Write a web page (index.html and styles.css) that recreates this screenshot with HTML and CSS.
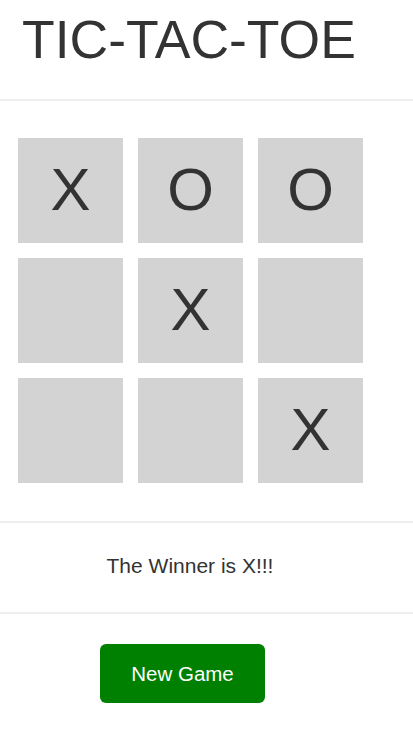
FILE: index.html
```html
<!DOCTYPE html>
<html>
<head>
<meta charset="utf-8">
<link rel="stylesheet" href="styles.css">
</head>
<body>
  <header class="header">
    <h1 class="title">TIC-TAC-TOE</h1>
  </header>
  <section class="board-wrap">
    <div class="board">
      <div class="cell">X</div>
      <div class="cell">O</div>
      <div class="cell">O</div>
      <div class="cell"></div>
      <div class="cell">X</div>
      <div class="cell"></div>
      <div class="cell"></div>
      <div class="cell"></div>
      <div class="cell">X</div>
    </div>
  </section>
  <section class="status">The Winner is X!!!</section>
  <section class="actions">
    <button class="new-game">New Game</button>
  </section>
</body>
</html>
```
FILE: styles.css
```css
html, body {
  margin: 0;
  padding: 0;
  background: #fff;
}
body {
  font-family: "Liberation Sans", Arial, sans-serif;
  color: #333;
}
.header {
  height: 99px;
  border-bottom: 2px solid #eee;
  box-sizing: content-box;
}
.title {
  margin: 0;
  padding: 9px 0 0 22px;
  font-size: 53.5px;
  line-height: 62px;
  font-weight: normal;
  color: #333;
}
.board-wrap {
  padding: 37px 0 38px 18px;
  border-bottom: 2px solid #eee;
}
.board {
  display: grid;
  grid-template-columns: repeat(3, 105px);
  grid-auto-rows: 105px;
  gap: 15px;
}
.cell {
  background: #d3d3d3;
  display: flex;
  align-items: center;
  justify-content: center;
  font-size: 60px;
  line-height: 1;
  color: #333;
  padding-bottom: 2px;
}
.status {
  padding: 31px 33px 34px 0;
  font-size: 21px;
  line-height: 24px;
  text-align: center;
  border-bottom: 2px solid #eee;
}
.actions {
  padding: 30px 0 30px 100px;
}
.new-game {
  width: 165px;
  height: 59px;
  border: none;
  border-radius: 6px;
  background: #008000;
  color: #fff;
  font-family: "Liberation Sans", Arial, sans-serif;
  font-size: 20.5px;
  padding: 0;
  cursor: pointer;
}
```
